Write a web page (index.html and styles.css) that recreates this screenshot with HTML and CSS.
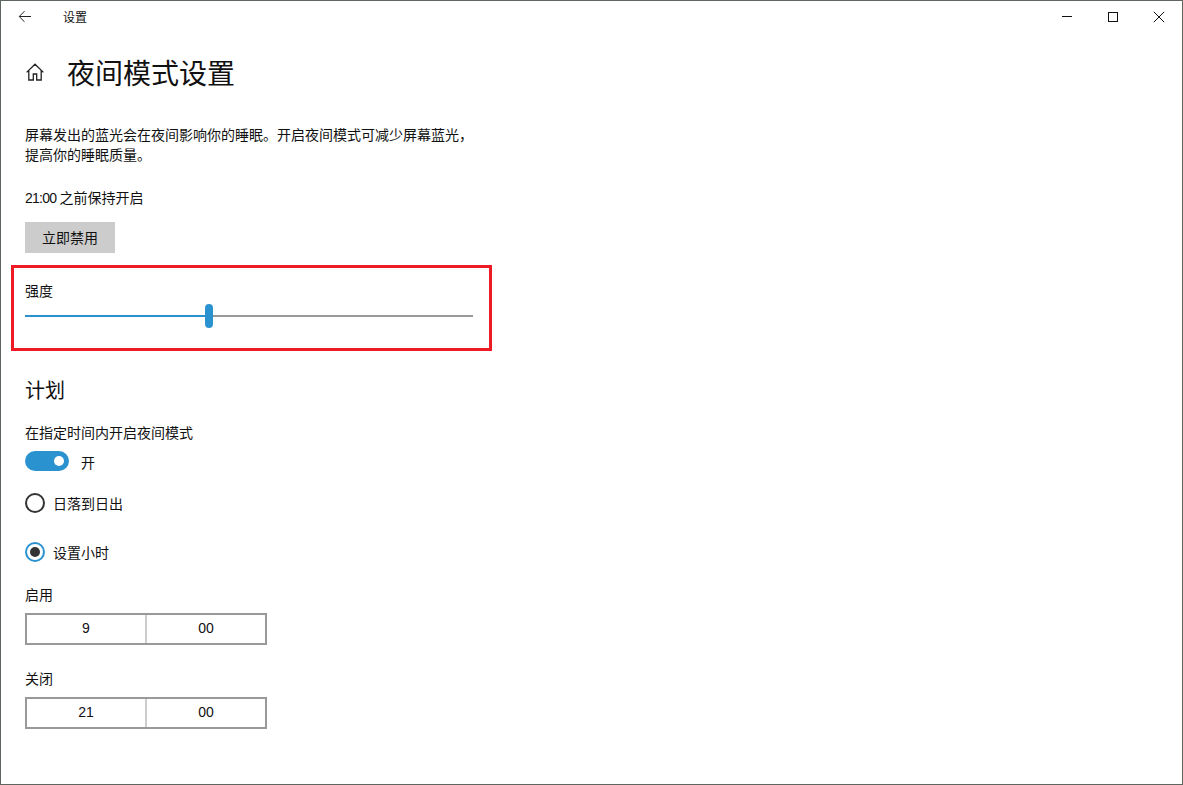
FILE: index.html
```html
<!DOCTYPE html>
<html lang="zh-CN">
<head>
<meta charset="utf-8">
<title>设置</title>
<link rel="stylesheet" href="styles.css">
</head>
<body>
<div class="window">
  <header class="titlebar">
    <div class="titlebar-left">
      <svg class="back" width="16" height="16" viewBox="0 0 16 16"><path d="M14 7.5H2.5M7.5 2.2 2.2 7.5l5.3 5.3" fill="none" stroke="#222" stroke-width="1"/></svg>
      <span class="app-name">设置</span>
    </div>
    <div class="controls">
      <svg width="12" height="12" viewBox="0 0 12 12"><path d="M1 5.5h10" stroke="#111" stroke-width="1"/></svg>
      <svg width="12" height="12" viewBox="0 0 12 12"><rect x="1.5" y="1.5" width="9" height="9" fill="none" stroke="#111" stroke-width="1"/></svg>
      <svg width="12" height="12" viewBox="0 0 12 12"><path d="M.8.8l10.4 10.4M11.2.8.8 11.2" stroke="#111" stroke-width="1"/></svg>
    </div>
  </header>
  <main class="content">
    <div class="page-head">
      <svg class="home" width="20" height="20" viewBox="0 0 20 20"><path d="M1.6 10.4 10 2.2l8.4 8.2M3.8 8.4v9.6h4.5v-6h3.4v6h4.5V8.4" fill="none" stroke="#222" stroke-width="1.3"/></svg>
      <h1>夜间模式设置</h1>
    </div>
    <p class="desc">屏幕发出的蓝光会在夜间影响你的睡眠。开启夜间模式可减少屏幕蓝光，<br>提高你的睡眠质量。</p>
    <p class="status"><span class="latin">21:00 </span>之前保持开启</p>
    <button class="btn">立即禁用</button>
    <section class="intensity">
      <div class="label">强度</div>
      <div class="slider">
        <div class="slider-fill"></div>
        <div class="slider-thumb"></div>
        <div class="slider-rest"></div>
      </div>
    </section>
    <h2>计划</h2>
    <div class="label schedule-label">在指定时间内开启夜间模式</div>
    <div class="toggle-row">
      <span class="toggle"><span class="knob"></span></span>
      <span class="toggle-text">开</span>
    </div>
    <div class="radio-row first"><span class="radio"></span><span>日落到日出</span></div>
    <div class="radio-row second"><span class="radio checked"></span><span>设置小时</span></div>
    <div class="label time-label">启用</div>
    <div class="time"><span class="cell">9</span><span class="cell">00</span></div>
    <div class="label time-label off">关闭</div>
    <div class="time"><span class="cell">21</span><span class="cell">00</span></div>
  </main>
</div>
</body>
</html>
```
FILE: styles.css
```css
* { box-sizing: border-box; }
html, body { margin: 0; padding: 0; height: 100%; background: #fff; }
body {
  font-family: "Noto Sans CJK SC", "Liberation Sans", sans-serif;
  font-size: 14px;
  color: #111;
}
.latin { font-family: "Liberation Sans", sans-serif; letter-spacing: -0.75px; }
.window {
  width: 1183px;
  height: 785px;
  border: 1px solid #5f6660;
  overflow: hidden;
  display: flex;
  flex-direction: column;
}
.titlebar {
  height: 32px;
  display: flex;
  justify-content: space-between;
  align-items: center;
  flex: none;
}
.titlebar-left { display: flex; align-items: center; }
.back { margin-left: 16px; }
.app-name { margin-left: 30px; font-size: 12px; line-height: 16px; }
.controls { display: flex; gap: 34px; margin-right: 17px; }
.content { padding-left: 24px; display: flex; flex-direction: column; align-items: flex-start; }
.page-head { display: flex; align-items: center; height: 44px; margin-top: 17px; }
h1 { margin: 0 0 0 22px; font-size: 28px; font-weight: 400; line-height: 44px; }
.desc { margin: 30px 0 0; line-height: 20px; width: 448px; }
.status { margin: 23px 0 0; line-height: 20px; }
.btn {
  margin-top: 14px;
  width: 90px;
  height: 31px;
  border: 0;
  padding: 0 0 2px;
  background: #ccc;
  font: inherit;
  color: #111;
}
.intensity {
  margin: 12px 0 0 -14px;
  width: 481px;
  height: 86px;
  border: 3px solid #ed1c24;
  padding: 12px 0 0 11px;
}
.label { line-height: 20px; }
.slider { margin-top: 4px; width: 448px; height: 24px; display: flex; align-items: center; }
.slider-fill { width: 180px; height: 2px; background: #2b92d0; }
.slider-thumb { width: 8px; height: 24px; border-radius: 4px; background: #2b92d0; flex: none; }
.slider-rest { flex: 1; height: 2px; background: #999; }
h2 { margin: 25px 0 0; font-size: 20px; font-weight: 400; line-height: 28px; }
.schedule-label { margin-top: 18px; }
.toggle-row { display: flex; align-items: center; margin-top: 9px; height: 20px; }
.toggle {
  width: 44px;
  height: 20px;
  border-radius: 10px;
  background: #2b92d0;
  display: flex;
  align-items: center;
  justify-content: flex-end;
  padding-right: 5px;
}
.knob { width: 10px; height: 10px; border-radius: 50%; background: #fff; }
.toggle-text { margin-left: 12px; padding-top: 2px; }
.radio-row { display: flex; align-items: center; height: 20px; gap: 8px; }
.radio-row.first { margin-top: 22px; }
.radio-row.second { margin-top: 29px; }
.radio {
  width: 20px;
  height: 20px;
  border: 2px solid #333;
  border-radius: 50%;
  display: flex;
  align-items: center;
  justify-content: center;
}
.radio.checked { border-color: #2b92d0; }
.radio.checked::after { content: ""; width: 10px; height: 10px; border-radius: 50%; background: #333; }
.time-label { margin-top: 22px; }
.time-label.off { margin-top: 23px; }
.time {
  margin-top: 9px;
  width: 242px;
  height: 32px;
  border: 2px solid #999;
  display: flex;
  font-family: "Liberation Sans", sans-serif;
}
.cell { width: 118px; line-height: 26px; text-align: center; }
.cell + .cell { width: 120px; border-left: 2px solid #ccc; }
```
